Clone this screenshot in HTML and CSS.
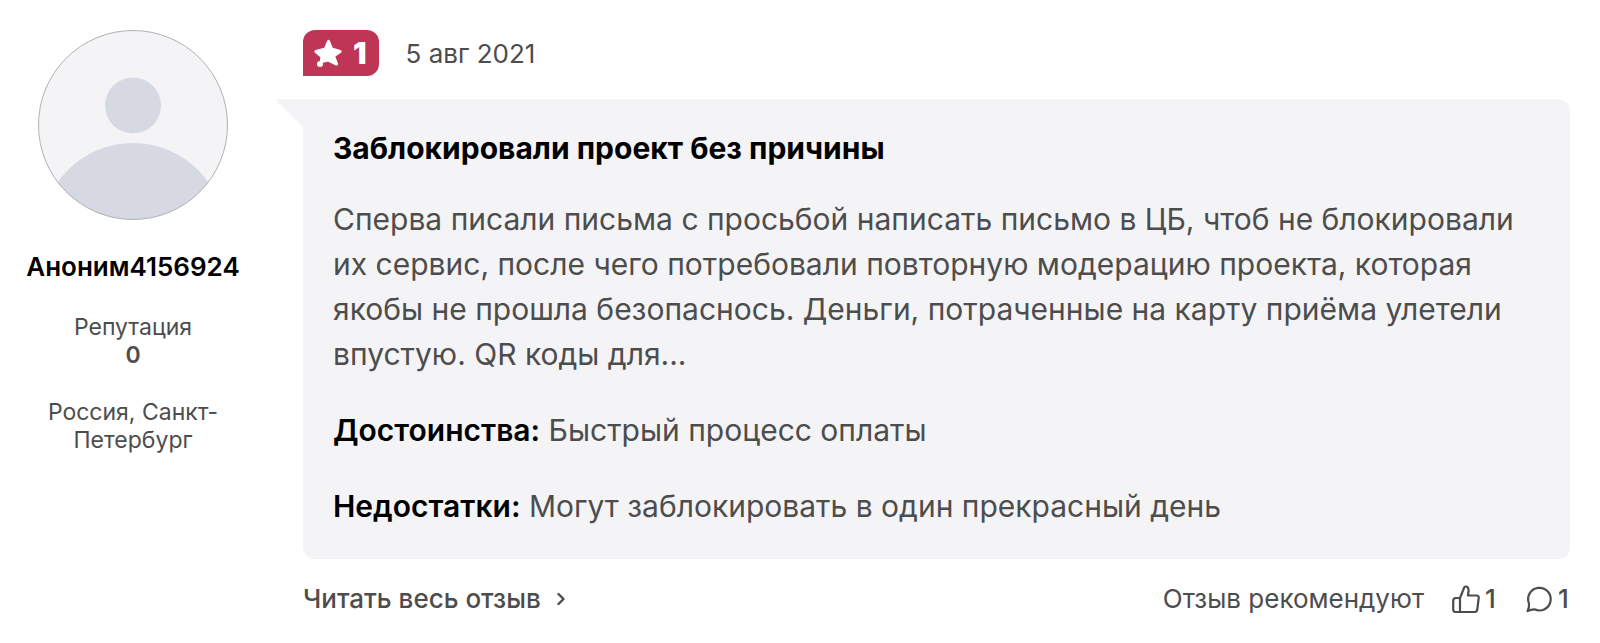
FILE: index.html
```html
<!DOCTYPE html>
<html lang="ru">
<head>
<meta charset="utf-8">
<meta name="viewport" content="width=device-width, initial-scale=1">
<title>Отзыв</title>
<link rel="stylesheet" href="styles.css">
</head>
<body>
<article class="review">
  <aside class="author">
    <svg class="avatar" viewBox="0 0 190 190" aria-hidden="true">
      <clipPath id="face"><circle cx="95" cy="95" r="94.5"/></clipPath>
      <circle cx="95" cy="95" r="94.5" fill="#f4f4f7"/>
      <g fill="#d6d9e2" clip-path="url(#face)">
        <circle cx="95" cy="75.500" r="28"/>
        <circle cx="95" cy="205" r="92"/>
      </g>
      <circle cx="95" cy="95" r="94.5" fill="none" stroke="#b0b0b2"/>
    </svg>
    <a class="name" href="#">Аноним4156924</a>
    <p class="meta">Репутация<br><b>0</b></p>
    <p class="meta">Россия, Санкт-Петербург</p>
  </aside>
  <div class="content">
    <header class="head">
      <span class="rating">
        <svg class="star" viewBox="0 0 30 30" aria-hidden="true"><path d="M15.500 3.500 18.500 11 27 13.500 20.500 18 23.500 26 15.500 22 8.500 23.500 9 18.500 3 13.500 12.500 11Z" fill="#fff" stroke="#fff" stroke-width="3.200" stroke-linejoin="round"/><circle cx="7" cy="26" r="3" fill="#fff"/></svg>
        <span>1</span>
      </span>
      <time class="date" datetime="2021-08-05">5 авг 2021</time>
    </header>
    <section class="bubble">
      <h2 class="title">Заблокировали проект без причины</h2>
      <p class="text">Сперва писали письма с просьбой написать письмо в ЦБ, чтоб не блокировали их сервис, после чего потребовали повторную модерацию проекта, которая якобы не прошла безопаснось. Деньги, потраченные на карту приёма улетели впустую. QR коды для...</p>
      <p class="text"><b>Достоинства:</b> Быстрый процесс оплаты</p>
      <p class="text"><b>Недостатки:</b> Могут заблокировать в один прекрасный день</p>
    </section>
    <footer class="foot">
      <a class="more" href="#">Читать весь отзыв
        <svg class="chevron" viewBox="0 0 8 14" aria-hidden="true"><path d="M1.500 2 6.500 7 1.500 12" fill="none" stroke="currentColor" stroke-width="2.400" stroke-linecap="round" stroke-linejoin="round"/></svg>
      </a>
      <div class="actions">
        <span>Отзыв рекомендуют</span>
        <button class="action" type="button" aria-label="Рекомендую: 1">
          <svg class="icon" viewBox="0 0 28 28" fill="none" stroke="currentColor" stroke-width="2.200" stroke-linejoin="round" aria-hidden="true"><path d="M8 13 12 3Q13 .8 15 1.800 17 3 16.500 6.500L16 10.500H24.500Q27 10.500 26.700 13L25.300 24.500Q25 27 22.500 27H3.500Q1.200 27 1.200 24.500V16Q1.200 13 4 13H8V27"/></svg>
          <span class="count">1</span>
        </button>
        <button class="action" type="button" aria-label="Комментарии: 1">
          <svg class="icon" viewBox="0 0 28 28" fill="none" stroke="currentColor" stroke-width="2.200" stroke-linejoin="round" aria-hidden="true"><path d="M2.500 26Q4.500 23 4 18.500A11.300 11.300 0 1 1 9.500 24.300Q6 24.500 2.500 26Z"/></svg>
          <span class="count">1</span>
        </button>
      </div>
    </footer>
  </div>
</article>
</body>
</html>
```
FILE: styles.css
```css
* { box-sizing: border-box; }
body {
  margin: 0;
  background: #fff;
  color: #4d4d4d;
  font-family: Inter, "Open Sans", sans-serif;
}
h2, p { margin: 0; }
a { color: inherit; text-decoration: none; }
.review {
  display: flex;
  gap: 60px;
  padding: 30px 30px 24px 23px;
}
.author {
  flex: none;
  width: 220px;
  display: flex;
  flex-direction: column;
  align-items: center;
  text-align: center;
}
.avatar { width: 190px; height: 190px; }
.name {
  margin-top: 30px;
  color: #000;
  font-size: 26px;
  font-weight: 600;
  line-height: 34px;
}
.meta {
  margin-top: 29px;
  font-size: 23px;
  line-height: 28px;
}
.meta b { font-weight: 600; }
.content { flex: 1; min-width: 0; }
.head { display: flex; align-items: center; gap: 27px; }
.rating {
  display: flex;
  align-items: center;
  gap: 10px;
  height: 46px;
  padding: 0 12px 0 10px;
  border-radius: 12px 12px 12px 0;
  background: #bf3556;
  color: #fff;
  font-size: 30px;
  font-weight: 900;
}
.star { width: 30px; height: 30px; }
.date { padding-top: 2px; font-size: 26px; line-height: 34px; }
.bubble {
  position: relative;
  display: flex;
  flex-direction: column;
  gap: 31px;
  margin-top: 23px;
  padding: 31px 30px 30px;
  border-radius: 0 12px 12px 12px;
  background: #f4f4f7;
}
.bubble::before {
  content: "";
  position: absolute;
  top: 0;
  right: 100%;
  width: 28px;
  height: 28px;
  background: inherit;
  clip-path: polygon(0 0, 100% 0, 100% 100%);
}
.title {
  color: #000;
  font-size: 30px;
  font-weight: 700;
  line-height: 36px;
}
.text { font-size: 30px; line-height: 45px; }
.text b { color: #000; font-weight: 600; }
.foot {
  display: flex;
  justify-content: space-between;
  align-items: center;
  margin-top: 23px;
  font-size: 26px;
  line-height: 34px;
}
.more { display: flex; align-items: center; gap: 16px; font-weight: 500; }
.chevron { width: 8px; height: 14px; }
.actions { display: flex; align-items: center; gap: 28px; }
.action {
  display: flex;
  align-items: center;
  gap: 4px;
  padding: 0;
  border: 0;
  background: none;
  color: inherit;
  font: inherit;
  font-weight: 500;
  cursor: pointer;
}
.icon { width: 28px; height: 28px; }
.count { min-width: 13px; text-align: center; }
```
